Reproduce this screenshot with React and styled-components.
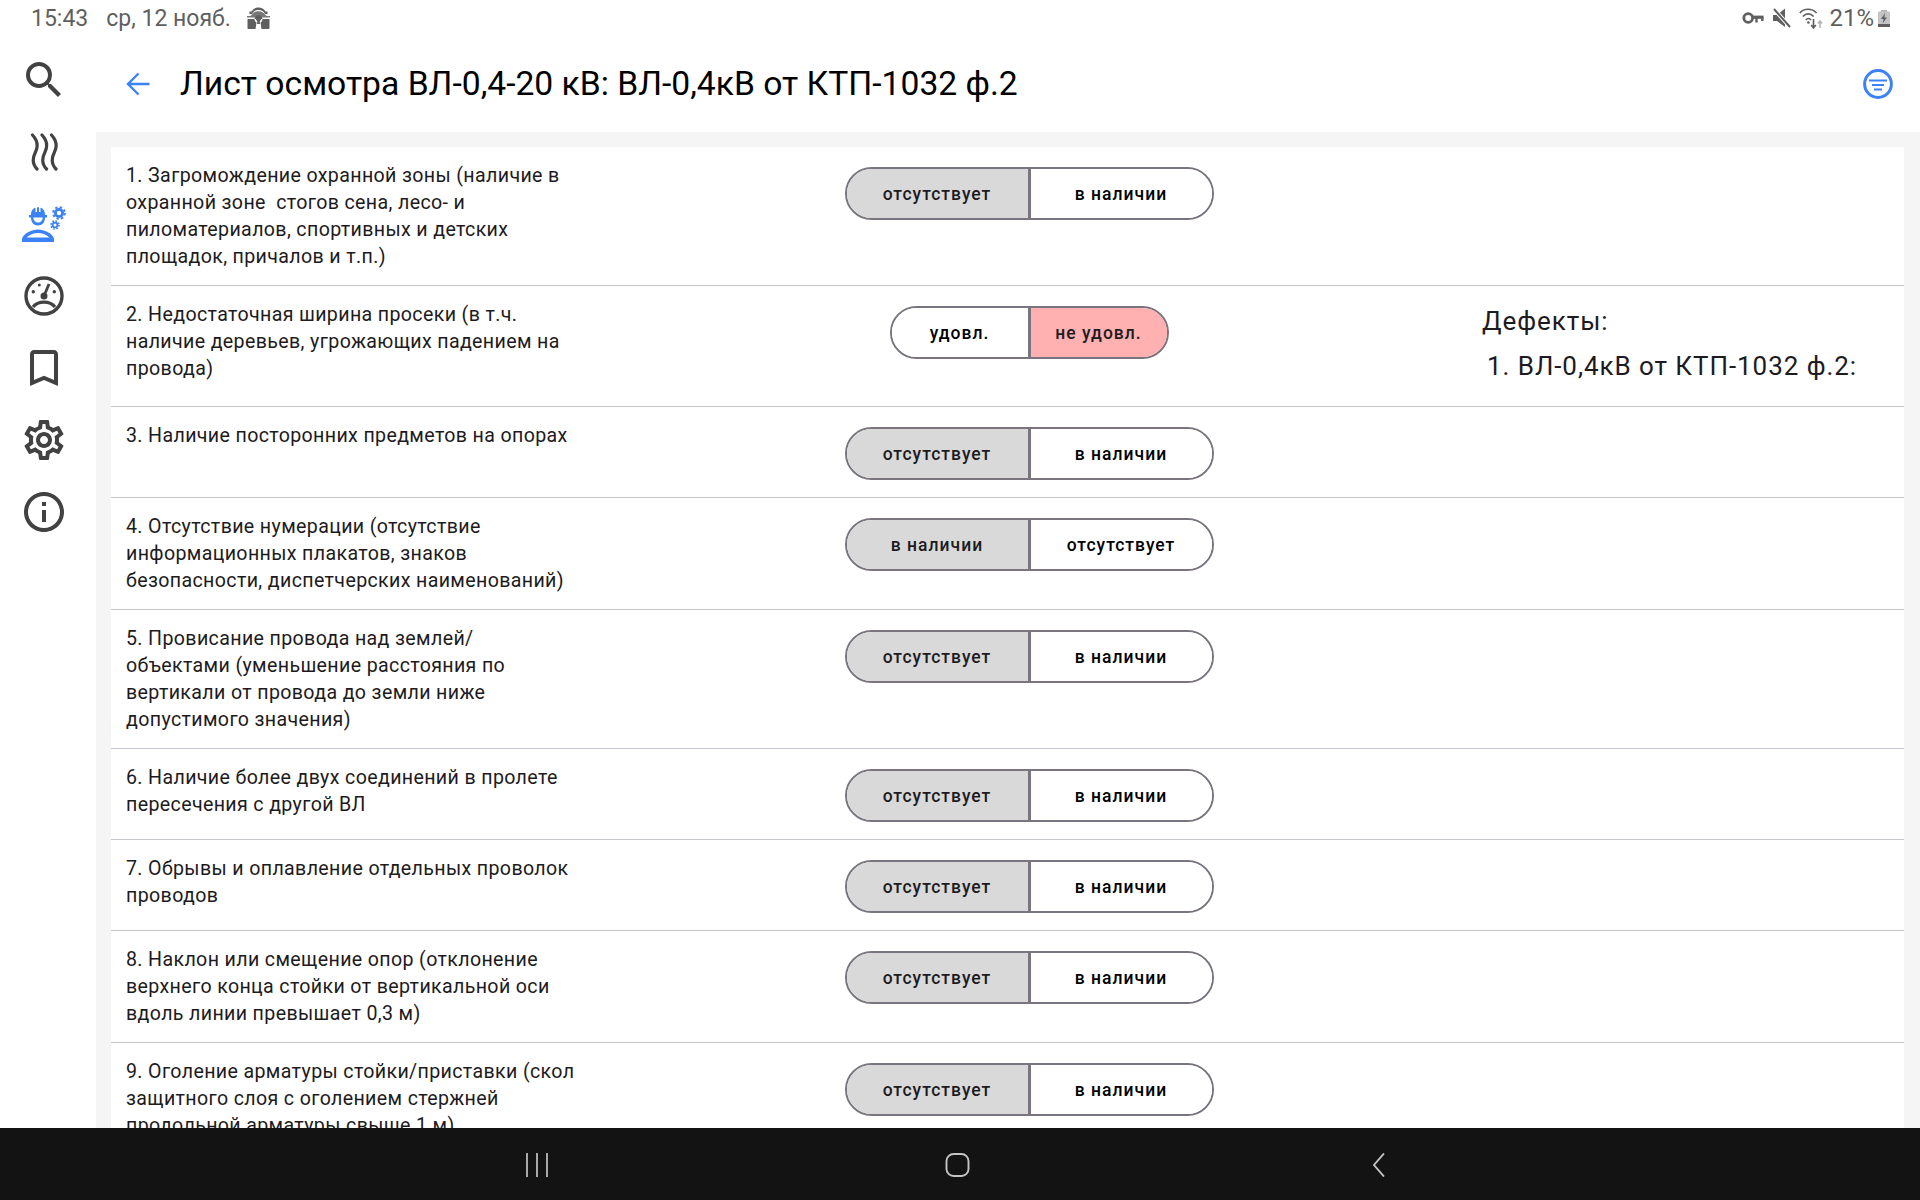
import React from "react";
import styled, { createGlobalStyle } from "styled-components";
import { MdSearch, MdBookmarkBorder, MdOutlineSettings, MdInfoOutline } from "react-icons/md";

const Global = createGlobalStyle`
  html, body { margin: 0; padding: 0; background: #fff; height: 100%; }
  body { font-family: Roboto, "Noto Sans", sans-serif; overflow: hidden; }
`;

const Screen = styled.div`
  width: 1920px; height: 1200px; display: flex; flex-direction: column; overflow: hidden; background: #fff;
`;
const StatusBar = styled.div`
  height: 36px; flex: none; display: flex; align-items: center; justify-content: space-between;
  padding: 0 30px 0 31px; color: #5f5f5f; font-size: 23px; font-weight: 400;
`;
const StatusGroup = styled.div`
  display: flex; align-items: center; gap: ${p => p.$gap || 0}px;
`;
const LockSlot = styled.span`
  display: flex; margin-left: -2px;
`;
const BatteryText = styled.span`
  font-size: 24px; margin-right: -2px;
`;
const Main = styled.div`
  flex: 1; min-height: 0; display: flex;
`;
const Sidebar = styled.nav`
  width: 96px; flex: none; display: flex; flex-direction: column; align-items: center; padding: 8px 8px 0 0; box-sizing: border-box;
  color: #424242;
`;
const SideIcon = styled.div`
  width: 48px; height: 72px; flex: none; display: flex; align-items: center; justify-content: center;
`;
const Column = styled.div`
  flex: 1; min-width: 0; display: flex; flex-direction: column;
`;
const Header = styled.header`
  height: 96px; flex: none; display: flex; align-items: center; padding: 0 27px 0 30px;
`;
const Title = styled.h1`
  margin: 0 0 0 30px; flex: 1; font-size: 33.65px; font-weight: 400; color: #000; white-space: nowrap; line-height: 1;
`;
const Content = styled.div`
  flex: 1; min-height: 0; background: #f5f5f5; padding: 15px 16px 0 15px; position: relative;
`;
const List = styled.div`
  background: #fff; height: 100%; overflow: hidden; position: relative;
`;
const Row = styled.div`
  display: grid; grid-template-columns: 556px 1fr; min-height: ${p => p.$min || 0}px; box-sizing: border-box;
  border-bottom: 1px solid #cac4d0;
  padding: 15px 0 15px 15px;
  &:last-child { border-bottom: 0; }
`;
const Question = styled.div`
  width: 454px; font-size: 19.6px; line-height: 27px; letter-spacing: 0.36px; color: #1d1b20; white-space: pre-wrap;
`;
const SwitchCell = styled.div`
  width: 694px; display: flex; justify-content: center; align-items: flex-start; padding-top: 5px;
`;
const Pill = styled.div`
  display: flex; height: 53px; box-sizing: border-box; border: 2px solid #79747e; border-radius: 27px; overflow: hidden; background: #fff;
`;
const Segment = styled.div`
  width: ${p => p.$w}px; display: flex; align-items: center; justify-content: center;
  font-size: 17.5px; font-weight: 500; letter-spacing: 1px; color: ${p => (p.$bg ? "#1d1b20" : "#000")};
  background: ${p => p.$bg || "#fff"};
  & + & { border-left: 3px solid #79747e; }
`;
const Defects = styled.aside`
  position: absolute; left: 1371px; top: 159px; width: 400px; color: #1d1b20; font-size: 26px; letter-spacing: 0.94px;
`;
const DefectTitle = styled.div`
  line-height: 30px;
`;
const DefectItem = styled.div`
  margin: 15px 0 0 5px; line-height: 30px; white-space: nowrap;
`;
const NavBar = styled.div`
  height: 72px; flex: none; background: #131313; display: grid; grid-template-columns: repeat(3, 421px); justify-content: center; align-items: center; justify-items: center;
  padding: 2px 5px 0 0; box-sizing: border-box;
`;

const blue = "#3b82f6";
const stroke = "#424242";

const IconWaves = () => (
  <svg width="30" height="38" viewBox="0 0 30 38" fill="none" stroke={stroke} strokeWidth="3.2" strokeLinecap="round">
    <path d="M3.5 2 C9 8 9.5 13 6.5 19 C3.5 25 3 31 8 36" />
    <path d="M13 2 C18.5 8 19 13 16 19 C13 25 12.5 31 17.5 36" />
    <path d="M22.5 2 C28 8 28.5 13 25.5 19 C22.5 25 22 31 27 36" />
  </svg>
);
const IconWorker = () => (
  <svg width="44" height="36" viewBox="0 0 44 36" fill={blue}>
    <path d="M9 9 C9 4.5 11 2.5 13.5 1.7 V6 H15 V1.2 H17 V6 H18.5 V1.7 C21 2.5 23 4.5 23 9 H25 V11.5 H23 C23 16.5 20 19.5 16 19.5 C12 19.5 9 16.5 9 11.5 H7 V9 Z" />
    <path d="M11.2 11.5 H20.8 C20.4 14.8 18.6 16.6 16 16.6 C13.4 16.6 11.6 14.8 11.2 11.5 Z" fill="#fff" />
    <path d="M0 36 V32.5 C2 27 10 23.5 16 23.5 C22 23.5 30 27 32 32.5 V36 Z" />
    <path d="M4.5 31.5 C8 28.2 12 27 16 27 C20 27 24 28.2 27.5 31.5 Z" fill="#fff" />
    <g fill="none" stroke={blue}>
      <circle cx="37" cy="7" r="3.6" strokeWidth="2.8" />
      <circle cx="37" cy="7" r="5.8" strokeWidth="2" strokeDasharray="2.4 2.15" />
      <circle cx="33" cy="19" r="2.4" strokeWidth="1.8" />
      <circle cx="33" cy="19" r="4" strokeWidth="1.6" strokeDasharray="1.6 1.54" />
    </g>
  </svg>
);
const IconGauge = () => (
  <svg width="40" height="40" viewBox="0 0 40 40" fill="none" stroke={stroke}>
    <circle cx="20" cy="20" r="18" strokeWidth="3.4" />
    <path d="M9 31 C14 24.5 26 24.5 31 31" strokeWidth="3.2" />
    <circle cx="20" cy="20" r="3.5" fill={stroke} stroke="none" />
    <path d="M20 20 L25 8" strokeWidth="2.8" />
    <g fill={stroke} stroke="none">
      <circle cx="9.3" cy="15.7" r="1.7" /><circle cx="30.3" cy="15.7" r="1.7" /><circle cx="15.3" cy="9" r="1.5" />
    </g>
  </svg>
);
const IconBack = () => (
  <svg width="24" height="24" viewBox="0 0 24 24" fill="none" stroke={blue} strokeWidth="2.4">
    <path d="M23.5 12 H2.5 M12.5 1.5 L2 12 L12.5 22.5" />
  </svg>
);
const IconFilter = () => (
  <svg width="30" height="30" viewBox="0 0 30 30" fill="none" stroke={blue}>
    <circle cx="15" cy="15" r="13.4" strokeWidth="3" />
    <path d="M6 11.5 H24 M9 16 H21 M11 20.5 H19" strokeWidth="2.2" />
  </svg>
);
const IconLock = () => (
  <svg width="23" height="22" viewBox="0 0 23 22" fill="#5f5f5f">
    <path d="M2.5 7 V4.5 H4.5 C6 2 8.5 .5 11.5 .5 C14.5 .5 17 2 18.5 4.5 H20.5 V7 H18 C17 4.5 14.5 3 11.5 3 C8.5 3 6 4.5 5 7 Z" />
    <path d="M0 9 H3.5 L5 7.5 C6 5.5 8.5 4.2 11.5 4.2 C14.5 4.2 17 5.5 18 7.5 L19.5 9 H23 V10.5 H0 Z" opacity=".85" />
    <path fillRule="evenodd" d="M.5 12 H22.5 V21 Q22.5 22 21.5 22 H1.5 Q.5 22 .5 21 Z M7.5 12 C8 9.5 9.5 8 11.5 8 C13.5 8 15 9.5 15.5 12 C15.5 14 14.5 15 13.5 15.5 L14.5 22 H8.5 L9.5 15.5 C8.5 15 7.5 14 7.5 12 Z" />
    <circle cx="11.5" cy="11.5" r="2.6" />
    <path d="M10.5 12 H12.5 L13 17 H10 Z" />
  </svg>
);
const IconKey = () => (
  <svg width="25" height="14" viewBox="0 0 25 14" fill="none" stroke="#5f5f5f">
    <circle cx="6.2" cy="7" r="4.4" strokeWidth="2.8" />
    <path d="M10 6.2 H21.5" strokeWidth="3.2" />
    <path d="M14.5 6 V11.5 M20.3 6 V10" strokeWidth="2.4" />
  </svg>
);
const IconMute = () => (
  <svg width="20" height="20" viewBox="0 0 20 20" fill="#5f5f5f">
    <path d="M0 7 H4 L12 .5 V19 L4 13 H0 Z" />
    <path d="M1 1 L17 19" stroke="#fff" strokeWidth="4" />
    <path d="M1 1 L17 19" stroke="#5f5f5f" strokeWidth="2" />
  </svg>
);
const IconWifi = () => (
  <svg width="24" height="22" viewBox="0 0 24 22" fill="none" stroke="#5f5f5f" strokeWidth="1.6">
    <path d="M.8 6 C5 1 13 1 17.6 6 M3.8 9.5 C7 6 11.5 6 14.6 9.5 M6.8 13 C8.5 11 10.5 11 12 13" />
    <circle cx="9.4" cy="15.5" r="1.3" fill="#5f5f5f" stroke="none" />
    <path d="M14.5 12 V21 M12.2 18 L14.5 21 L16.8 18" />
    <path d="M21 21 V14 M18.8 16.5 L21 14 L23.2 16.5" stroke="#b5b5b5" />
  </svg>
);
const IconBattery = () => (
  <svg width="12" height="17" viewBox="0 0 12 17">
    <rect x="3" y="0" width="6" height="2" fill="#b5b5b5" />
    <rect x="0" y="1.5" width="12" height="15.5" rx="1" fill="#c4c4c4" />
    <rect x="0" y="14" width="12" height="3" fill="#5f5f5f" />
    <path d="M7 3 L3 9 H5.6 L4.6 13.5 L9 7.5 H6.4 Z" fill="#5f5f5f" />
  </svg>
);
const NavRecents = () => (
  <svg width="24" height="24" viewBox="0 0 24 24" stroke="#c4c4c4" strokeWidth="1.7">
    <path d="M2 0 V24 M12 0 V24 M22 0 V24" />
  </svg>
);
const NavHome = () => (
  <svg width="25" height="24" viewBox="0 0 25 24" fill="none" stroke="#c4c4c4" strokeWidth="1.9">
    <rect x="1.5" y="1" width="22" height="22" rx="7" />
  </svg>
);
const NavBack = () => (
  <svg width="14" height="24" viewBox="0 0 14 24" fill="none" stroke="#c4c4c4" strokeWidth="1.9">
    <path d="M12 .5 L2 12 L12 23.5" />
  </svg>
);

const Pair = ({ a, b, on = 0, wa = 181, wb = 181, tone = "#d9d9d9" }) => (
  <Pill>
    <Segment $w={wa} $bg={on === 0 ? tone : undefined}>{a}</Segment>
    <Segment $w={wb} $bg={on === 1 ? tone : undefined}>{b}</Segment>
  </Pill>
);

const A = "отсутствует";
const B = "в наличии";
const rows = [
  { q: "1. Загромождение охранной зоны (наличие в охранной зоне  стогов сена, лесо- и пиломатериалов, спортивных и детских площадок, причалов и т.п.)", min: 139 },
  { q: "2. Недостаточная ширина просеки (в т.ч. наличие деревьев, угрожающих падением на провода)", min: 121, pair: { a: "удовл.", b: "не удовл.", on: 1, wa: 136, wb: 136, tone: "#ffb0b0" } },
  { q: "3. Наличие посторонних предметов на опорах", min: 91 },
  { q: "4. Отсутствие нумерации (отсутствие информационных плакатов, знаков безопасности, диспетчерских наименований)", min: 112, pair: { a: B, b: A } },
  { q: "5. Провисание провода над землей/ объектами (уменьшение расстояния по вертикали от провода до земли ниже допустимого значения)", min: 139 },
  { q: "6. Наличие более двух соединений в пролете пересечения с другой ВЛ", min: 91 },
  { q: "7. Обрывы и оплавление отдельных проволок проводов", min: 91 },
  { q: "8. Наклон или смещение опор (отклонение верхнего конца стойки от вертикальной оси вдоль линии превышает 0,3 м)", min: 112 },
  { q: "9. Оголение арматуры стойки/приставки (скол защитного слоя с оголением стержней продольной арматуры свыше 1 м)", min: 112 },
];

export default function App() {
  return (
    <Screen>
      <Global />
      <StatusBar>
        <StatusGroup $gap={18}>
          <span>15:43</span><span>ср, 12 нояб.</span><LockSlot><IconLock /></LockSlot>
        </StatusGroup>
        <StatusGroup $gap={6}>
          <IconKey /><IconMute /><IconWifi /><BatteryText>21%</BatteryText><IconBattery />
        </StatusGroup>
      </StatusBar>
      <Main>
        <Sidebar>
          <SideIcon><MdSearch size={48} /></SideIcon>
          <SideIcon><IconWaves /></SideIcon>
          <SideIcon><IconWorker /></SideIcon>
          <SideIcon><IconGauge /></SideIcon>
          <SideIcon><MdBookmarkBorder size={48} /></SideIcon>
          <SideIcon><MdOutlineSettings size={48} /></SideIcon>
          <SideIcon><MdInfoOutline size={48} /></SideIcon>
        </Sidebar>
        <Column>
          <Header>
            <IconBack />
            <Title>Лист осмотра ВЛ-0,4-20 кВ: ВЛ-0,4кВ от КТП-1032 ф.2</Title>
            <IconFilter />
          </Header>
          <Content>
            <List>
              {rows.map(r => (
                <Row key={r.q} $min={r.min}>
                  <Question>{r.q}</Question>
                  <SwitchCell><Pair {...(r.pair || { a: A, b: B })} /></SwitchCell>
                </Row>
              ))}
              <Defects>
                <DefectTitle>Дефекты:</DefectTitle>
                <DefectItem>1. ВЛ-0,4кВ от КТП-1032 ф.2:</DefectItem>
              </Defects>
            </List>
          </Content>
        </Column>
      </Main>
      <NavBar>
        <NavRecents /><NavHome /><NavBack />
      </NavBar>
    </Screen>
  );
}
